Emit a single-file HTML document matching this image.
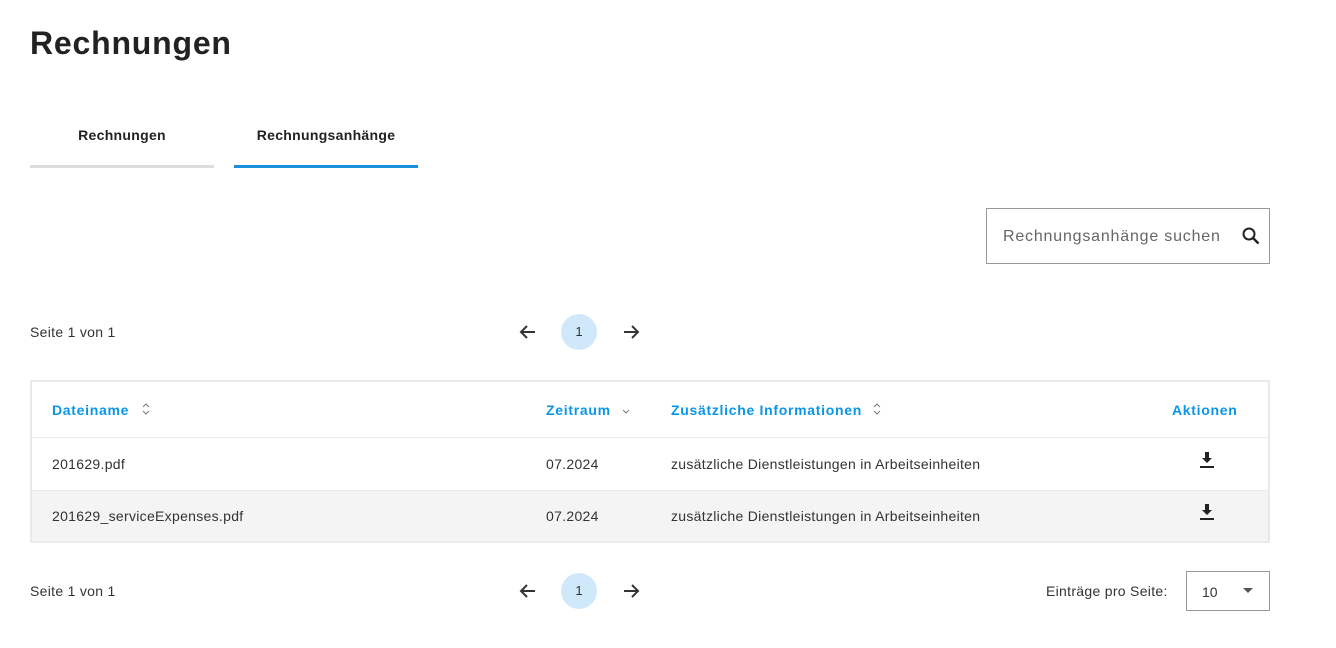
<!DOCTYPE html>
<html><head><meta charset="utf-8"><style>
*{box-sizing:border-box;margin:0;padding:0}
body{width:1336px;height:648px;background:#fff;font-family:"Liberation Sans",sans-serif;color:#333;position:relative;overflow:hidden}
.a{position:absolute;white-space:nowrap}
h1{position:absolute;left:30px;top:25px;font-size:32px;font-weight:bold;color:#222;letter-spacing:0.8px}
.tab{position:absolute;top:120px;width:184px;height:48px;text-align:center;font-size:14px;font-weight:bold;color:#222;padding-top:7px;letter-spacing:0.3px}
.search{position:absolute;left:986px;top:208px;width:284px;height:56px;border:1px solid #999;font-size:16px;color:#666;padding:19px 0 0 16px;letter-spacing:0.8px}
.pg{font-size:14px;color:#333;letter-spacing:0.3px}
.circ{position:absolute;width:36px;height:36px;border-radius:50%;background:#cfe9fb;text-align:center;line-height:36px;font-size:13px;color:#333}
.tbl{position:absolute;left:30px;top:380px;width:1240px;height:163px;border:2px solid #e8eaeb}
.th{color:#0a96e6;font-weight:bold;font-size:14px;letter-spacing:0.7px}
.td{font-size:14px;color:#333;letter-spacing:0.3px}
</style></head><body>
<h1>Rechnungen</h1>
<div class="tab" style="left:30px;border-bottom:3px solid #ddd">Rechnungen</div>
<div class="tab" style="left:234px;border-bottom:3px solid #1a8fdc">Rechnungsanhänge</div>
<div class="search">Rechnungsanhänge suchen</div>
<svg class="a" style="left:1241px;top:226px" width="20" height="20" viewBox="0 0 20 20"><circle cx="8" cy="8" r="5.5" fill="none" stroke="#222" stroke-width="2"/><path d="M12 12l5.5 5.5" stroke="#222" stroke-width="2.4"/></svg>

<div class="a pg" style="left:30px;top:324px">Seite 1 von 1</div>
<svg class="a" style="left:518px;top:322px" width="20" height="20" viewBox="0 0 20 20"><path d="M17 10H3M9 4l-6 6 6 6" fill="none" stroke="#333" stroke-width="2"/></svg>
<div class="circ" style="left:561px;top:314px">1</div>
<svg class="a" style="left:621px;top:322px" width="20" height="20" viewBox="0 0 20 20"><path d="M3 10h14M11 4l6 6-6 6" fill="none" stroke="#333" stroke-width="2"/></svg>

<div class="tbl">
<div style="position:absolute;left:0;top:55px;width:1236px;height:1px;background:#e8eaeb"></div>
<div style="position:absolute;left:0;top:108px;width:1236px;height:51px;background:#f4f4f4;border-top:1px solid #e8eaeb"></div>
</div>
<div class="a th" style="left:52px;top:402px">Dateiname</div>
<svg class="a" style="left:142px;top:402px" width="8" height="14" viewBox="0 0 8 14"><path d="M1 5l3-3 3 3M1 9l3 3 3-3" fill="none" stroke="#777" stroke-width="1"/></svg>
<div class="a th" style="left:546px;top:402px">Zeitraum</div>
<svg class="a" style="left:622px;top:407px" width="8" height="8" viewBox="0 0 8 8"><path d="M1 3l3 3 3-3" fill="none" stroke="#777" stroke-width="1"/></svg>
<div class="a th" style="left:671px;top:402px">Zusätzliche Informationen</div>
<svg class="a" style="left:873px;top:402px" width="8" height="14" viewBox="0 0 8 14"><path d="M1 5l3-3 3 3M1 9l3 3 3-3" fill="none" stroke="#777" stroke-width="1"/></svg>
<div class="a th" style="left:1172px;top:402px">Aktionen</div>

<div class="a td" style="left:52px;top:456px">201629.pdf</div>
<div class="a td" style="left:546px;top:456px">07.2024</div>
<div class="a td" style="left:671px;top:456px">zusätzliche Dienstleistungen in Arbeitseinheiten</div>
<svg class="a" style="left:1199px;top:452px" width="16" height="17" viewBox="0 0 16 17"><path d="M6 0h4v6h3l-5 5-5-5h3z M1 14h14v2H1z" fill="#222"/></svg>
<div class="a td" style="left:52px;top:508px">201629_serviceExpenses.pdf</div>
<div class="a td" style="left:546px;top:508px">07.2024</div>
<div class="a td" style="left:671px;top:508px">zusätzliche Dienstleistungen in Arbeitseinheiten</div>
<svg class="a" style="left:1199px;top:504px" width="16" height="17" viewBox="0 0 16 17"><path d="M6 0h4v6h3l-5 5-5-5h3z M1 14h14v2H1z" fill="#222"/></svg>

<div class="a pg" style="left:30px;top:583px">Seite 1 von 1</div>
<svg class="a" style="left:518px;top:581px" width="20" height="20" viewBox="0 0 20 20"><path d="M17 10H3M9 4l-6 6 6 6" fill="none" stroke="#333" stroke-width="2"/></svg>
<div class="circ" style="left:561px;top:573px">1</div>
<svg class="a" style="left:621px;top:581px" width="20" height="20" viewBox="0 0 20 20"><path d="M3 10h14M11 4l6 6-6 6" fill="none" stroke="#333" stroke-width="2"/></svg>
<div class="a pg" style="left:1046px;top:583px">Einträge pro Seite:</div>
<div class="a" style="left:1186px;top:571px;width:84px;height:40px;border:1px solid #999;font-size:14px;padding:12px 0 0 15px">10</div>
<svg class="a" style="left:1243px;top:588px" width="10" height="6" viewBox="0 0 10 6"><path d="M0 0h10L5 5z" fill="#555"/></svg>
</body></html>
